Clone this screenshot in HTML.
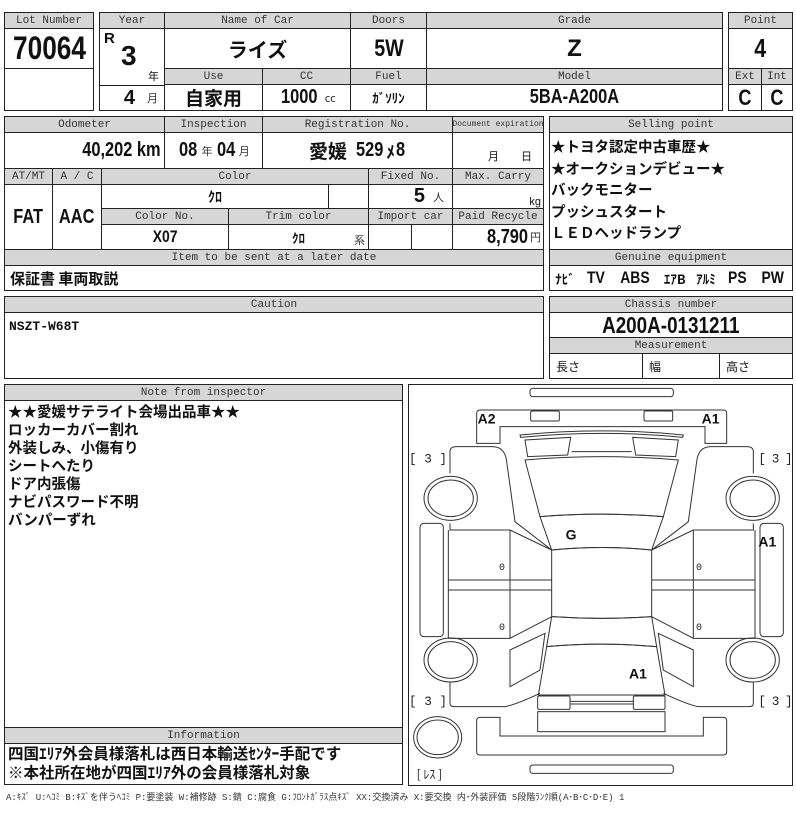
<!DOCTYPE html>
<html><head><meta charset="utf-8"><style>
body{margin:0;width:796px;height:831px;background:#fff;position:relative;overflow:hidden;font-family:"Liberation Sans","Noto Sans CJK JP",sans-serif;color:#111}
.c,.h{position:absolute;box-sizing:border-box;border:1px solid #222;display:flex;align-items:center;justify-content:center;white-space:nowrap;overflow:hidden}
.h{background:#d6d6d6;font-family:"Liberation Mono","Noto Sans CJK JP",monospace;font-size:11px;color:#333}
.v{font-family:"Liberation Sans Narrow","Liberation Sans","Noto Sans CJK JP",sans-serif;font-weight:bold;font-size:20px;color:#111}
.j{font-family:"Noto Sans CJK JP",sans-serif;font-weight:bold}
.s{font-size:11px;font-weight:normal;font-family:"Noto Sans CJK JP",sans-serif;margin-left:3px;color:#333}
.a{position:absolute}
.n{display:inline-block;transform:scaleX(.82)}
.nr{display:inline-block;transform:scaleX(.82);transform-origin:right center}
</style></head><body>
<div class="h" style="left:4px;top:12px;width:90px;height:17px">Lot Number</div>
<div class="c v" style="left:4px;top:28px;width:90px;height:41px;font-size:32px"><span class="n">70064</span></div>
<div class="c" style="left:4px;top:68px;width:90px;height:43px"></div>
<div class="h" style="left:99px;top:12px;width:66px;height:17px">Year</div>
<div class="c" style="left:99px;top:28px;width:66px;height:58px"></div>
<div class="a v" style="left:104px;top:30px;font-size:15px">R</div>
<div class="a v" style="left:121px;top:40px;font-size:28px">3</div>
<div class="a" style="left:148px;top:68px;font-size:11px">年</div>
<div class="c v" style="left:99px;top:85px;width:66px;height:26px;justify-content:flex-end;padding-right:6px">4<span class="s" style="margin-left:12px">月</span></div>
<div class="h" style="left:164px;top:12px;width:187px;height:17px">Name of Car</div>
<div class="h" style="left:350px;top:12px;width:77px;height:17px">Doors</div>
<div class="h" style="left:426px;top:12px;width:297px;height:17px">Grade</div>
<div class="c v j" style="left:164px;top:28px;width:187px;height:41px;font-size:20px">ライズ</div>
<div class="c v" style="left:350px;top:28px;width:77px;height:41px;font-size:24px"><span class="n">5W</span></div>
<div class="c v" style="left:426px;top:28px;width:297px;height:41px;font-size:24px">Z</div>
<div class="h" style="left:164px;top:68px;width:99px;height:17px">Use</div>
<div class="h" style="left:262px;top:68px;width:89px;height:17px">CC</div>
<div class="h" style="left:350px;top:68px;width:77px;height:17px">Fuel</div>
<div class="h" style="left:426px;top:68px;width:297px;height:17px">Model</div>
<div class="c j" style="left:164px;top:84px;width:99px;height:27px;font-size:19px">自家用</div>
<div class="c v" style="left:262px;top:84px;width:89px;height:27px"><span class="n">1000</span><span class="s">cc</span></div>
<div class="c j" style="left:350px;top:84px;width:77px;height:27px;font-size:13px">ｶﾞｿﾘﾝ</div>
<div class="c v" style="left:426px;top:84px;width:297px;height:27px"><span class="n">5BA-A200A</span></div>
<div class="h" style="left:728px;top:12px;width:65px;height:17px">Point</div>
<div class="c v" style="left:728px;top:28px;width:65px;height:41px;font-size:26px"><span class="n">4</span></div>
<div class="h" style="left:728px;top:68px;width:34px;height:17px">Ext</div>
<div class="h" style="left:761px;top:68px;width:32px;height:17px">Int</div>
<div class="c v" style="left:728px;top:84px;width:34px;height:27px;font-size:22px"><span class="n">C</span></div>
<div class="c v" style="left:761px;top:84px;width:32px;height:27px;font-size:22px"><span class="n">C</span></div>
<div class="h" style="left:4px;top:116px;width:161px;height:17px">Odometer</div>
<div class="h" style="left:164px;top:116px;width:99px;height:17px">Inspection</div>
<div class="h" style="left:262px;top:116px;width:191px;height:17px">Registration No.</div>
<div class="h" style="left:452px;top:116px;width:92px;height:17px;font-size:8px">Document expiration</div>
<div class="c v" style="left:4px;top:132px;width:161px;height:37px;justify-content:flex-end;padding-right:3px"><span class="nr">40,202 km</span></div>
<div class="c v" style="left:164px;top:132px;width:99px;height:37px"><span class="n">08</span><span class="s" style="margin:0 2px">年</span><span class="n">04</span><span class="s" style="margin-left:2px">月</span></div>
<div class="c v" style="left:262px;top:132px;width:191px;height:37px"><span class="j" style="font-size:19px;margin-right:6px">愛媛</span><span class="n">529</span><span class="j" style="font-size:17px">ﾒ</span><span class="n">8</span></div>
<div class="c" style="left:452px;top:132px;width:92px;height:37px;font-size:11px;align-items:flex-end;padding-bottom:4px"><span style="margin-left:24px">月</span><span style="margin-left:22px">日</span></div>
<div class="h" style="left:4px;top:168px;width:49px;height:17px">AT/MT</div>
<div class="h" style="left:52px;top:168px;width:50px;height:17px">A / C</div>
<div class="h" style="left:101px;top:168px;width:268px;height:17px">Color</div>
<div class="h" style="left:368px;top:168px;width:85px;height:17px">Fixed No.</div>
<div class="h" style="left:452px;top:168px;width:92px;height:17px">Max. Carry</div>
<div class="c v" style="left:4px;top:184px;width:49px;height:66px"><span class="n">FAT</span></div>
<div class="c v" style="left:52px;top:184px;width:50px;height:66px"><span class="n">AAC</span></div>
<div class="c j" style="left:101px;top:184px;width:228px;height:25px;font-size:14px">ｸﾛ</div>
<div class="c" style="left:328px;top:184px;width:41px;height:25px"></div>
<div class="c v" style="left:368px;top:184px;width:85px;height:25px;justify-content:flex-end;padding-right:8px">5<span class="s" style="margin-left:8px">人</span></div>
<div class="c" style="left:452px;top:184px;width:92px;height:25px;justify-content:flex-end;padding-right:2px;font-size:11px;align-items:flex-end">kg</div>
<div class="h" style="left:101px;top:208px;width:128px;height:17px">Color No.</div>
<div class="h" style="left:228px;top:208px;width:141px;height:17px">Trim color</div>
<div class="h" style="left:368px;top:208px;width:85px;height:17px">Import car</div>
<div class="h" style="left:452px;top:208px;width:92px;height:17px">Paid Recycle</div>
<div class="c v" style="left:101px;top:224px;width:128px;height:26px;font-size:17px"><span class="n">X07</span></div>
<div class="c j" style="left:228px;top:224px;width:141px;height:26px;font-size:13px">ｸﾛ<span class="s" style="position:absolute;right:3px;top:7px">系</span></div>
<div class="c" style="left:368px;top:224px;width:44px;height:26px"></div>
<div class="c" style="left:411px;top:224px;width:42px;height:26px"></div>
<div class="c v" style="left:452px;top:224px;width:92px;height:26px;justify-content:flex-end;padding-right:2px"><span class="nr">8,790</span><span class="s" style="margin-left:2px">円</span></div>
<div class="h" style="left:4px;top:249px;width:540px;height:17px">Item to be sent at a later date</div>
<div class="c j" style="left:4px;top:265px;width:540px;height:26px;justify-content:flex-start;padding-left:5px;font-size:15px">保証書 車両取説</div>
<div class="h" style="left:549px;top:116px;width:244px;height:17px">Selling point</div>
<div class="c j" style="left:549px;top:132px;width:244px;height:118px;font-size:14.5px;display:block;line-height:21.6px;padding:3px 0 0 1px">★トヨタ認定中古車歴★<br>★オークションデビュー★<br>バックモニター<br>プッシュスタート<br>ＬＥＤヘッドランプ</div>
<div class="h" style="left:549px;top:249px;width:244px;height:17px">Genuine equipment</div>
<div class="c v" style="left:549px;top:265px;width:244px;height:26px;font-size:17px;justify-content:space-around"><span class="j" style="font-size:13px">ﾅﾋﾞ</span><span class="n">TV</span><span class="n">ABS</span><span class="j" style="font-size:13px">ｴｱB</span><span class="j" style="font-size:13px">ｱﾙﾐ</span><span class="n">PS</span><span class="n">PW</span></div>
<div class="h" style="left:4px;top:296px;width:540px;height:17px">Caution</div>
<div class="c" style="left:4px;top:312px;width:540px;height:67px;align-items:flex-start;justify-content:flex-start;padding:6px 0 0 4px;font-size:13px;font-family:'Liberation Mono',monospace;font-weight:bold">NSZT-W68T</div>
<div class="h" style="left:549px;top:296px;width:244px;height:17px">Chassis number</div>
<div class="c v" style="left:549px;top:312px;width:244px;height:26px;font-size:23px"><span class="n">A200A-0131211</span></div>
<div class="h" style="left:549px;top:337px;width:244px;height:17px">Measurement</div>
<div class="c" style="left:549px;top:353px;width:94px;height:26px;justify-content:flex-start;padding-left:6px;font-size:12px">長さ</div>
<div class="c" style="left:642px;top:353px;width:78px;height:26px;justify-content:flex-start;padding-left:6px;font-size:12px">幅</div>
<div class="c" style="left:719px;top:353px;width:74px;height:26px;justify-content:flex-start;padding-left:6px;font-size:12px">高さ</div>
<div class="h" style="left:4px;top:384px;width:399px;height:17px">Note from inspector</div>
<div class="c j" style="left:4px;top:400px;width:399px;height:328px;display:block;font-size:14.5px;line-height:18px;padding:2px 0 0 3px">★★愛媛サテライト会場出品車★★<br>ロッカーカバー割れ<br>外装しみ、小傷有り<br>シートへたり<br>ドア内張傷<br>ナビパスワード不明<br>バンパーずれ</div>
<div class="h" style="left:4px;top:727px;width:399px;height:17px">Information</div>
<div class="c j" style="left:4px;top:743px;width:399px;height:42px;display:block;font-size:15.5px;line-height:19px;padding:0 0 0 3px">四国ｴﾘｱ外会員様落札は西日本輸送ｾﾝﾀｰ手配です<br>※本社所在地が四国ｴﾘｱ外の会員様落札対象</div>
<div class="c" style="left:408px;top:384px;width:385px;height:402px"></div>
<svg class="a" style="left:405px;top:380px" width="391" height="410" viewBox="0 0 1173 1230">
<defs><g id="side" fill="none" stroke="#333" stroke-width="3">
<rect x="45" y="430" width="70" height="340" rx="12"/>
<ellipse cx="137" cy="355" rx="80" ry="66"/><ellipse cx="137" cy="355" rx="68" ry="55"/>
<ellipse cx="137" cy="840" rx="80" ry="66"/><ellipse cx="137" cy="840" rx="68" ry="55"/>
<path d="M135,280 L135,215 Q135,200 155,200 L262,200 Q300,200 305,245 L330,425 L440,510"/>
<path d="M135,430 L135,450 L315,450 L440,510 M130,450 L130,775 M130,600 L440,600 M130,630 L440,630 M315,450 L315,775 M130,775 L315,775 L440,710"/>
<path d="M315,810 L420,760 L405,870 L315,920 Z"/>
<path d="M135,905 L135,970 Q135,980 150,980 L300,980 Q330,975 405,940"/>
</g></defs>
<g fill="none" stroke="#333" stroke-width="3">
<rect x="375" y="25" width="430" height="25" rx="8"/>
<path d="M215,100 Q215,90 225,90 L955,90 Q965,90 965,100 L965,190 L900,190 L900,140 L285,140 L285,190 L215,190 Z"/>
<rect x="377" y="93" width="86" height="30" rx="4"/><rect x="717" y="93" width="86" height="30" rx="4"/>
<path d="M345,165 Q590,140 835,165 L833,172 Q590,148 347,172 Z"/>
<path d="M360,180 L497,172 L488,225 L368,230 Z M683,172 L820,180 L812,230 L692,225 Z M500,215 L680,215"/>
<path d="M360,240 Q590,220 820,240 L775,410 Q590,395 405,410 Z"/>
<path d="M405,410 Q590,395 775,410 L740,510 Q590,495 440,510 Z"/>
<path d="M440,510 Q590,495 740,510 L740,710 Q590,720 440,710 Z"/>
<path d="M440,710 Q590,720 740,710 L755,800 Q590,785 425,800 Z"/>
<path d="M425,800 Q590,785 755,800 L780,945 L400,945 Z"/>
<rect x="398" y="948" width="97" height="40" rx="4"/><rect x="685" y="948" width="95" height="40" rx="4"/>
<path d="M495,964 L685,964 M495,972 L685,972"/>
<rect x="398" y="995" width="382" height="60"/>
<path d="M225,1012 L285,1012 L285,1068 L895,1068 L895,1012 L955,1012 Q965,1012 965,1022 L965,1115 Q965,1125 955,1125 L225,1125 Q215,1125 215,1115 L215,1022 Q215,1012 225,1012 Z"/>
<rect x="375" y="1155" width="430" height="25" rx="8"/>
<ellipse cx="98" cy="1072" rx="72" ry="62"/><ellipse cx="98" cy="1072" rx="62" ry="52"/>
</g>
<use href="#side"/>
<g transform="translate(1180,0) scale(-1,1)"><use href="#side"/></g>
<g font-family="Liberation Sans,sans-serif" font-weight="bold" font-size="42" fill="#111">
<text x="218" y="130">A2</text><text x="890" y="130">A1</text>
<text x="482" y="478">G</text><text x="1060" y="500">A1</text><text x="672" y="895">A1</text>
</g>
<g font-family="Liberation Mono,monospace" font-size="38" fill="#222">
<text x="12" y="248" xml:space="preserve">[ 3 ]</text><text x="1060" y="248" textLength="103" xml:space="preserve">[ 3 ]</text>
<text x="12" y="975" xml:space="preserve">[ 3 ]</text><text x="1060" y="975" textLength="103" xml:space="preserve">[ 3 ]</text>
<text x="282" y="570" font-size="30">0</text><text x="282" y="750" font-size="30">0</text>
<text x="873" y="570" font-size="30">0</text><text x="873" y="750" font-size="30">0</text>
</g>
<text x="35" y="1195" font-family="Noto Sans CJK JP,sans-serif" font-size="36" fill="#222">[ ﾚｽ ]</text>
</svg>
<div class="a" style="left:6px;top:790px;font-size:9px;font-family:'Liberation Mono','Noto Sans CJK JP',monospace;color:#333;white-space:nowrap">A:ｷｽﾞ U:ﾍｺﾐ B:ｷｽﾞを伴うﾍｺﾐ P:要塗装 W:補修跡 S:錆 C:腐食 G:ﾌﾛﾝﾄｶﾞﾗｽ点ｷｽﾞ XX:交換済み X:要交換 内･外装評価 5段階ﾗﾝｸ順(A･B･C･D･E) 1</div>
</body></html>
